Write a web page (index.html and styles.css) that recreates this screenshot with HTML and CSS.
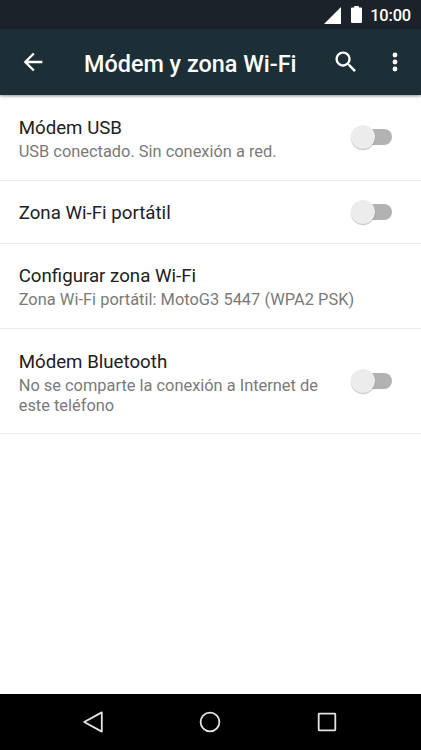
FILE: index.html
```html
<!DOCTYPE html>
<html lang="es">
<head>
<meta charset="utf-8">
<title>Módem y zona Wi-Fi</title>
<link rel="stylesheet" href="styles.css">
</head>
<body>
<div class="screen">
  <div class="status">
    <svg class="signal" viewBox="0 0 17 17"><path d="M17 0V17H0Z"/></svg>
    <svg class="battery" viewBox="0 0 11 17"><path d="M3.2 0H7.8V1.5H10Q11 1.5 11 2.5V16Q11 17 10 17H1Q0 17 0 16V2.5Q0 1.5 1 1.5H3.2Z"/></svg>
    <span class="time">10:00</span>
  </div>
  <header class="bar">
    <svg class="icon" viewBox="0 0 24 24"><path d="M20 11H7.83l5.59-5.59L12 4l-8 8 8 8 1.41-1.41L7.83 13H20v-2z"/></svg>
    <h1 class="title"><span class="line">Módem y zona Wi-Fi</span></h1>
    <svg class="icon search" viewBox="0 0 24 24"><path d="M15.5 14h-.79l-.28-.27C15.41 12.59 16 11.11 16 9.5 16 5.91 13.09 3 9.5 3S3 5.91 3 9.5 5.91 16 9.5 16c1.61 0 3.09-.59 4.23-1.57l.27.28v.79l5 4.99L20.49 19l-4.99-5zm-6 0C7.01 14 5 11.99 5 9.5S7.01 5 9.5 5 14 7.01 14 9.5 11.99 14 9.5 14z"/></svg>
    <svg class="icon more" viewBox="0 0 24 24"><circle cx="12" cy="6" r="2.1"/><circle cx="12" cy="12" r="2.1"/><circle cx="12" cy="18" r="2.1"/></svg>
  </header>
  <main class="list">
    <section class="row usb">
      <div class="text">
        <div class="name"><span class="line">Módem USB</span></div>
        <div class="note"><span class="line">USB conectado. Sin conexión a red.</span></div>
      </div>
      <div class="switch"><div class="thumb"></div></div>
    </section>
    <section class="row hotspot">
      <div class="text">
        <div class="name"><span class="line">Zona Wi-Fi portátil</span></div>
      </div>
      <div class="switch"><div class="thumb"></div></div>
    </section>
    <section class="row config">
      <div class="text">
        <div class="name"><span class="line">Configurar zona Wi-Fi</span></div>
        <div class="note"><span class="line">Zona Wi-Fi portátil: MotoG3 5447 (WPA2 PSK)</span></div>
      </div>
    </section>
    <section class="row bluetooth">
      <div class="text">
        <div class="name"><span class="line">Módem Bluetooth</span></div>
        <div class="note"><span class="line">No se comparte la conexión a Internet de<br>este teléfono</span></div>
      </div>
      <div class="switch"><div class="thumb"></div></div>
    </section>
  </main>
  <nav class="nav">
    <svg viewBox="0 0 24 24"><path d="M20.8 2.4V21.6L3.2 12Z"/></svg>
    <svg viewBox="0 0 24 24"><circle cx="12" cy="12" r="9.4"/></svg>
    <svg viewBox="0 0 24 24"><rect x="3.7" y="3.7" width="16.6" height="16.6" rx=".5"/></svg>
  </nav>
</div>
</body>
</html>
```
FILE: styles.css
```css
* { box-sizing: border-box; }
body {
  margin: 0;
  font-family: Roboto, "Liberation Sans", sans-serif;
  background: #fff;
}
.screen {
  width: 421px;
  height: 750px;
  display: flex;
  flex-direction: column;
  overflow: hidden;
}
.line { white-space: nowrap; }
.status {
  height: 29px;
  flex: none;
  display: flex;
  justify-content: flex-end;
  align-items: flex-start;
  padding: 6px 10px 0 0;
  background: #1b2229;
  color: #fff;
  fill: #fff;
}
.signal { width: 17px; height: 17px; margin: 1px 10px 0 0; }
.battery { width: 11px; height: 17px; margin-right: 8px; }
.time { font-size: 16.4px; font-weight: 500; line-height: 19px; letter-spacing: -.15px; }
.bar {
  height: 66px;
  flex: none;
  display: flex;
  align-items: center;
  padding: 0 12px 0 19px;
  background: #1d2f36;
  color: #fff;
  fill: #fff;
  box-shadow: 0 1px 3px rgba(0, 0, 0, .45);
  z-index: 1;
}
.icon { width: 28px; height: 28px; flex: none; }
.title {
  flex: 1;
  margin: 3px 0 0 37px;
  font-size: 23.4px;
  font-weight: 500;
  line-height: 28px;
}
.search { margin-right: 21px; }
.list { flex: 1; }
.row {
  display: flex;
  align-items: center;
  padding: 0 29px 0 18.7px;
  border-bottom: 1px solid #ebebeb;
}
.text { flex: 1; padding-top: 2px; }
.usb { height: 86px; }
.usb .switch { margin-bottom: 1px; }
.hotspot { height: 63px; }
.config { height: 85px; }
.bluetooth { height: 105px; }
.bluetooth .text { padding-top: 3px; }
.name { font-size: 18.7px; line-height: 24px; color: #212121; }
.note { font-size: 16.4px; line-height: 19.5px; padding-top: 2px; color: #7a7a7a; }
.config .note { letter-spacing: .025px; }
.switch {
  width: 35px;
  height: 16px;
  flex: none;
  display: flex;
  align-items: center;
  border-radius: 8px;
  background: #b2b2b2;
}
.thumb {
  width: 24px;
  height: 24px;
  flex: none;
  margin-left: -6px;
  border-radius: 50%;
  background: #ececec;
  box-shadow: 0 1px 1px rgba(0, 0, 0, .25);
}
.nav {
  height: 56px;
  flex: none;
  display: flex;
  justify-content: space-between;
  align-items: center;
  padding: 0 82px 0 81px;
  background: #000;
}
.nav svg { width: 24px; height: 24px; fill: none; stroke: #e4e4e4; stroke-width: 1.8; stroke-linejoin: round; }
```
